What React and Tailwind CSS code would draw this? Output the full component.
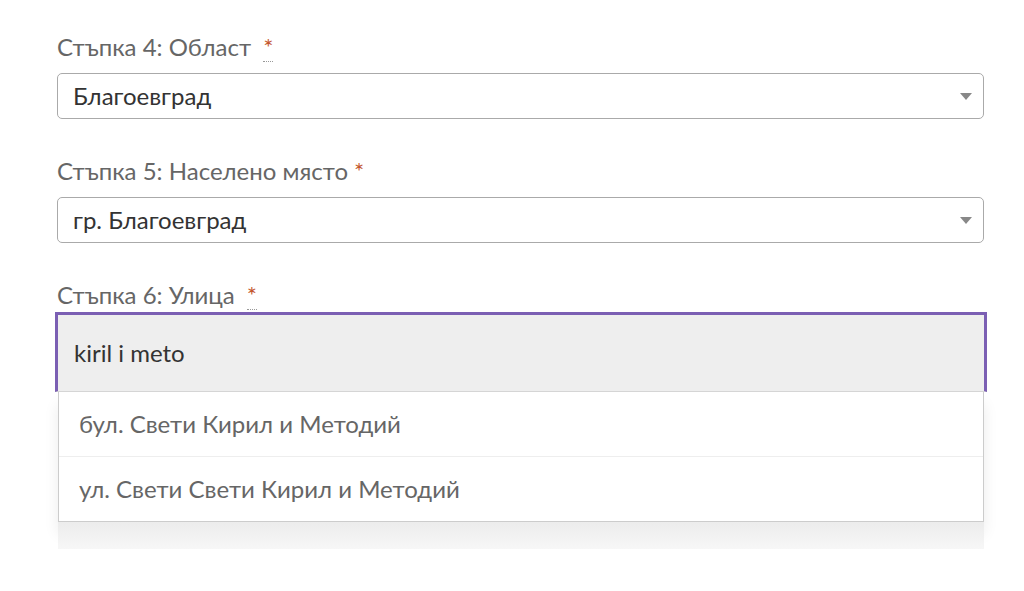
const font = { fontFamily: 'Lato, "Open Sans", sans-serif' };

function Label({ text, underline = true }) {
  return (
    <div className="text-[24px] leading-[28px] text-[#666666]">
      {text}
      {underline ? (
        <span className="ml-[12px] text-[#c4572f] border-b border-dotted border-[#999]">*</span>
      ) : (
        <span className="ml-[6px] text-[#c4572f]">*</span>
      )}
    </div>
  );
}

function FakeSelect({ value }) {
  return (
    <div className="mt-[12px] h-[46px] border border-[#aaaaaa] rounded-[5px] bg-white flex items-center justify-between pl-[15px] pr-[11px]">
      <span className="text-[24px] text-[#333333]">{value}</span>
      <span className="w-0 h-0 border-l-[6px] border-r-[6px] border-t-[7px] border-l-transparent border-r-transparent border-t-[#888888]" />
    </div>
  );
}

export default function App() {
  return (
    <div className="w-[1024px] h-[591px] bg-white overflow-hidden" style={font}>
      <div className="pl-[57px] pr-[40px] pt-[33px]">
        <Label text="Стъпка 4: Област" />
        <FakeSelect value="Благоевград" />

        <div className="mt-[38px]">
          <Label text="Стъпка 5: Населено място" underline={false} />
        </div>
        <FakeSelect value="гр. Благоевград" />

        <div className="mt-[38px]">
          <Label text="Стъпка 6: Улица" />
        </div>
        <div className="mt-[3px] -ml-[2px] -mr-[3px]">
          <div className="h-[80px] bg-[#eeeeee] border-[3px] border-b border-[#7b5fb3] border-b-[#d5d5d5] flex items-center pl-[16px]">
            <span className="text-[24px] text-[#333333]">kiril i meto</span>
          </div>
          <div className="mx-[3px] bg-white border border-t-0 border-[#cccccc] shadow-[0_12px_14px_rgba(0,0,0,0.08)]">
            <div className="h-[65px] flex items-center pl-[20px] text-[24px] text-[#666666] border-b border-[#eeeeee]">
              бул. Свети Кирил и Методий
            </div>
            <div className="h-[64px] flex items-center pl-[20px] text-[24px] text-[#666666]">
              ул. Свети Свети Кирил и Методий
            </div>
          </div>
          <div className="mx-[3px] h-[27px] bg-gradient-to-b from-[#ececec] to-[#f7f7f7]" />
        </div>
      </div>
    </div>
  );
}
